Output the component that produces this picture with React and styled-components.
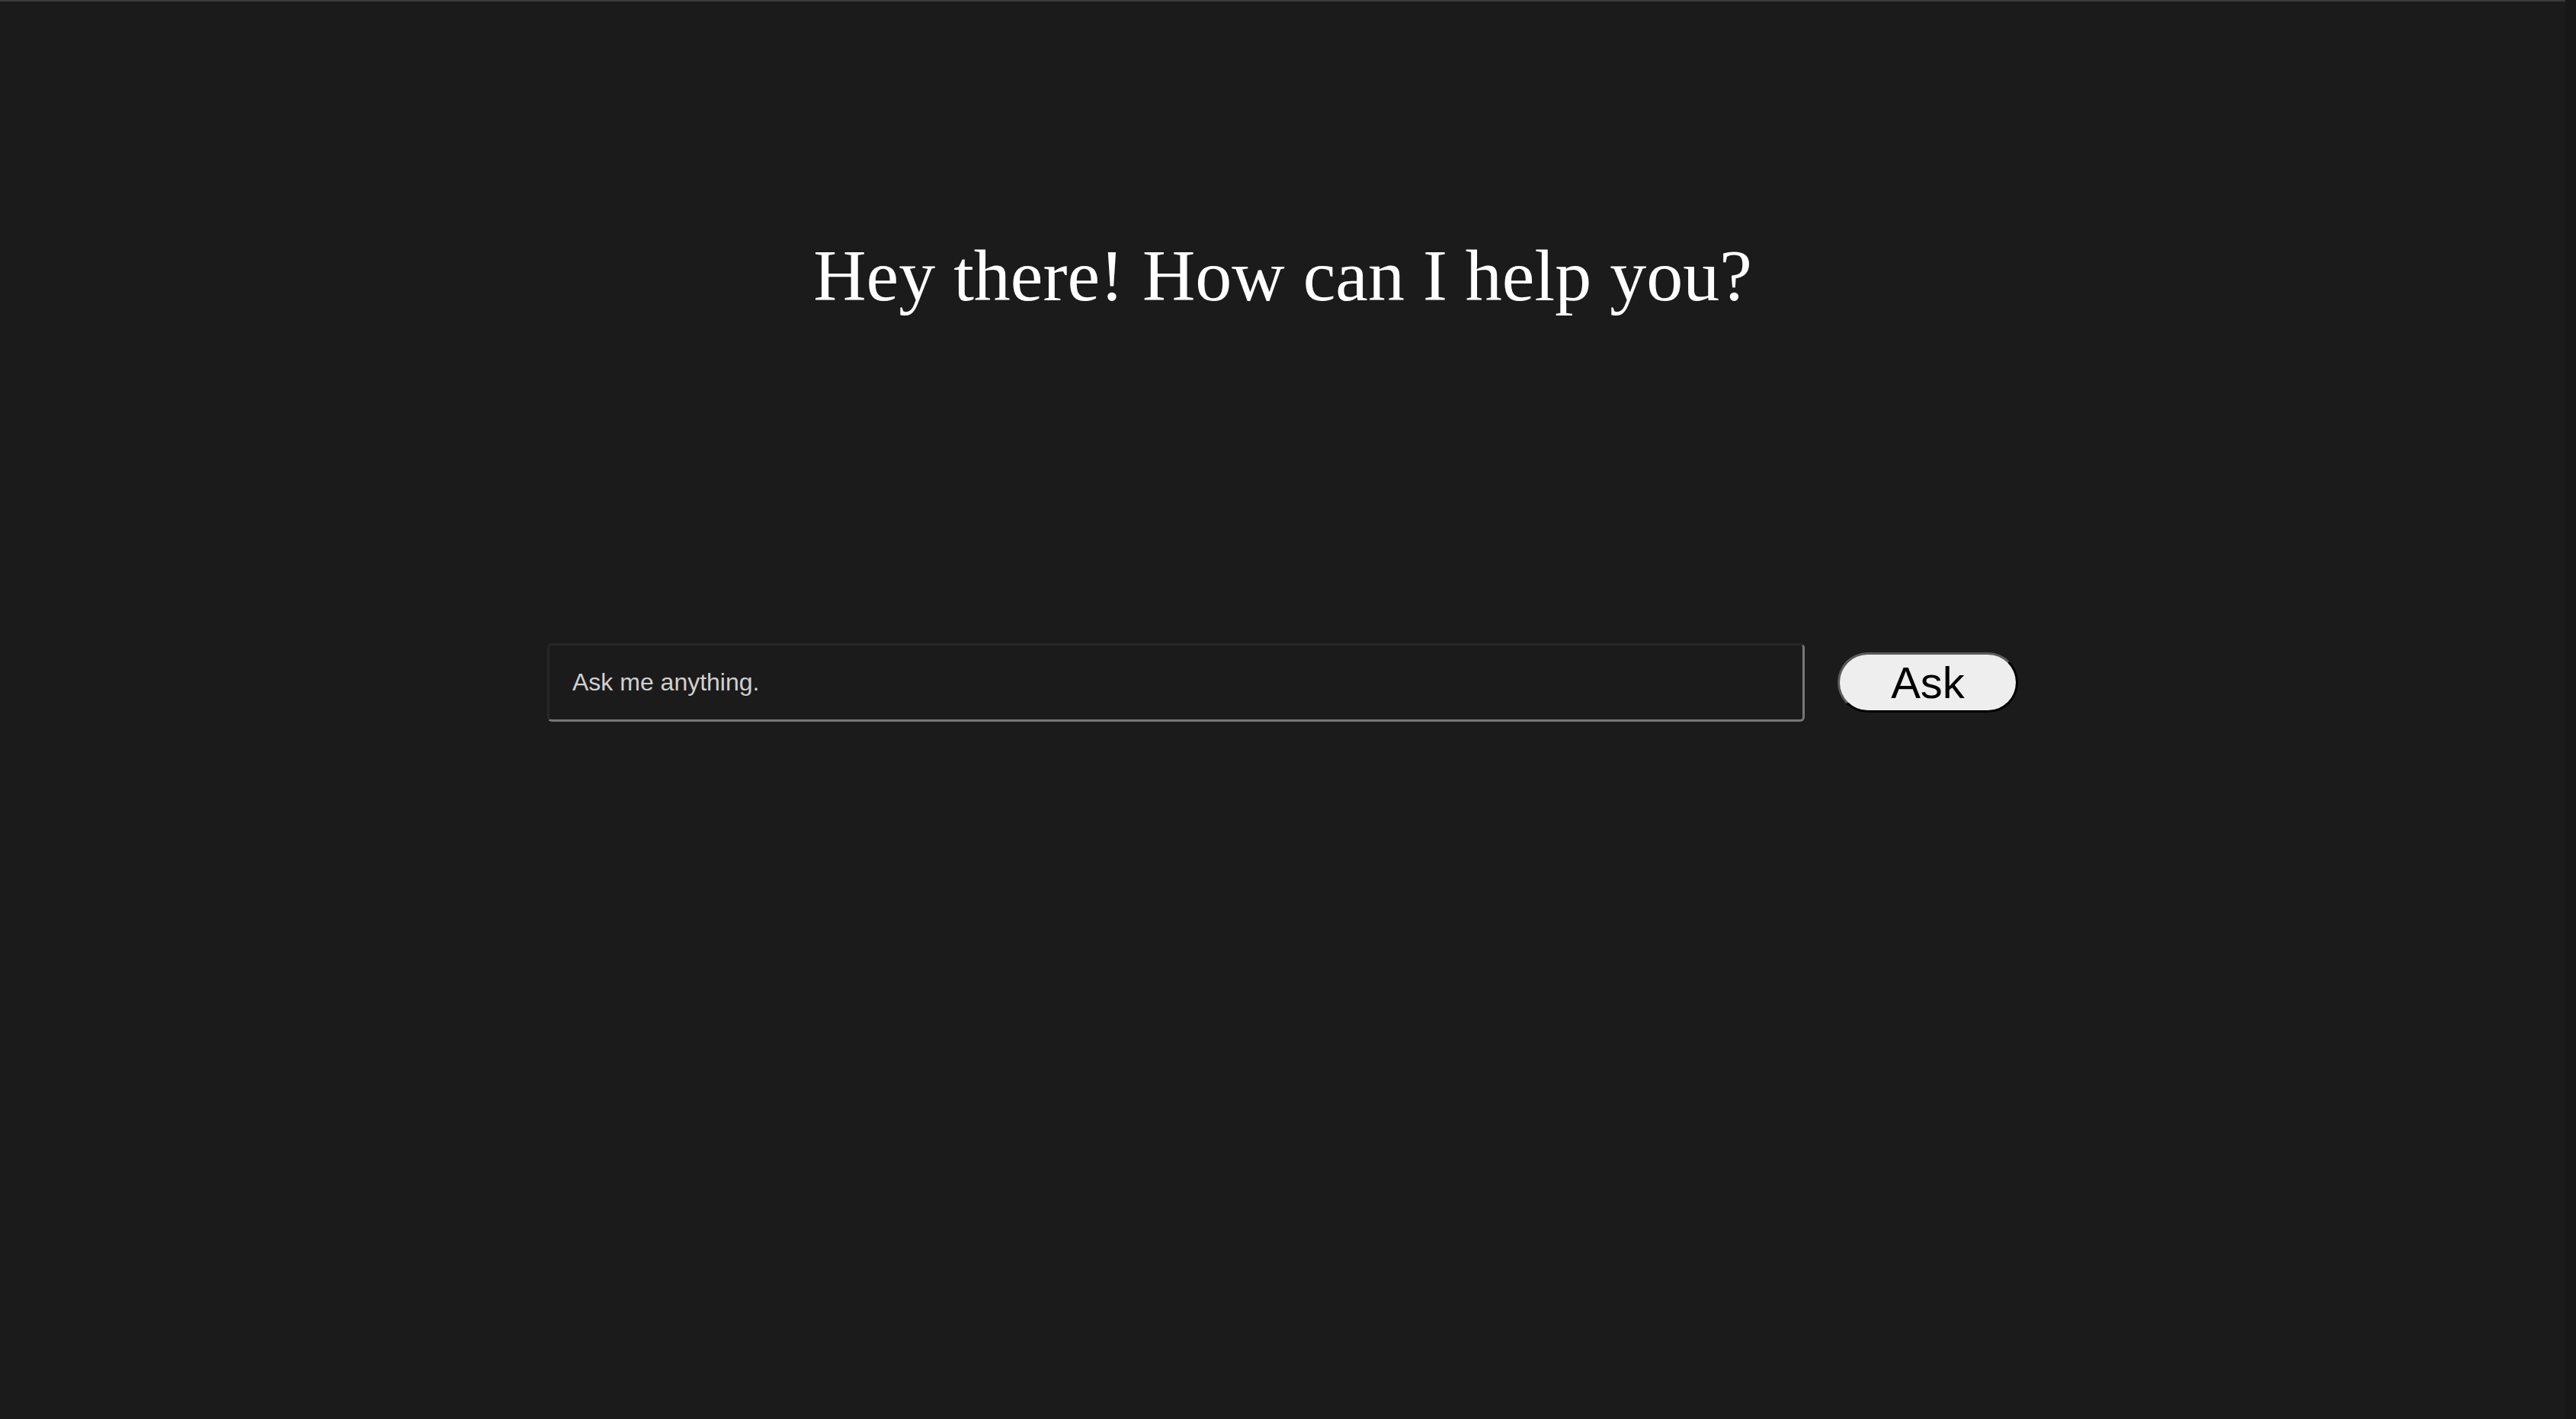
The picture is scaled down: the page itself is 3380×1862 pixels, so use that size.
import styled, { createGlobalStyle } from 'styled-components';

const GlobalStyle = createGlobalStyle`
  html, body {
    margin: 0;
    padding: 0;
    background-color: #1b1b1b;
  }
`;

const Frame = styled.div`
  display: flex;
  height: 1862px;
  overflow: hidden;
  background-color: #1b1b1b;
`;

const Page = styled.main`
  flex: 1;
  display: flex;
  flex-direction: column;
  align-items: center;
  border-top: 2px solid #3b3b3b;
`;

const Gutter = styled.div`
  width: 14px;
  background-color: #171717;
`;

const Title = styled.h1`
  margin: 312px 0 0;
  font-family: 'Liberation Serif', 'Times New Roman', serif;
  font-weight: 400;
  font-size: 96px;
  line-height: 1;
  color: #ffffff;
  letter-spacing: 0;
`;

const AskForm = styled.form`
  display: flex;
  align-items: center;
  gap: 43px;
  margin-top: 434px;
`;

const Field = styled.input`
  box-sizing: border-box;
  width: 1650px;
  height: 103px;
  padding: 0 30px;
  background-color: #1b1b1b;
  border: 3px solid #777;
  border-top-color: #272727;
  border-left-color: #272727;
  border-radius: 6px;
  font-family: 'Liberation Sans', Arial, sans-serif;
  font-size: 32px;
  color: #d0d0d0;
  outline: none;

  &::placeholder {
    color: #d0d0d0;
  }
`;

const AskButton = styled.button`
  box-sizing: border-box;
  width: 237px;
  height: 79px;
  background-color: #eeeeee;
  border: 3px solid #000;
  border-top-color: #5a5a5a;
  border-left-color: #5a5a5a;
  border-radius: 40px;
  font-family: 'Liberation Sans', Arial, sans-serif;
  font-size: 58px;
  line-height: 1;
  color: #000;
  cursor: pointer;
`;

const App = () => (
  <Frame>
    <GlobalStyle />
    <Page>
      <Title>Hey there! How can I help you?</Title>
      <AskForm onSubmit={e => e.preventDefault()}>
        <Field type="text" placeholder="Ask me anything." />
        <AskButton type="submit">Ask</AskButton>
      </AskForm>
    </Page>
    <Gutter />
  </Frame>
);

export default App;
